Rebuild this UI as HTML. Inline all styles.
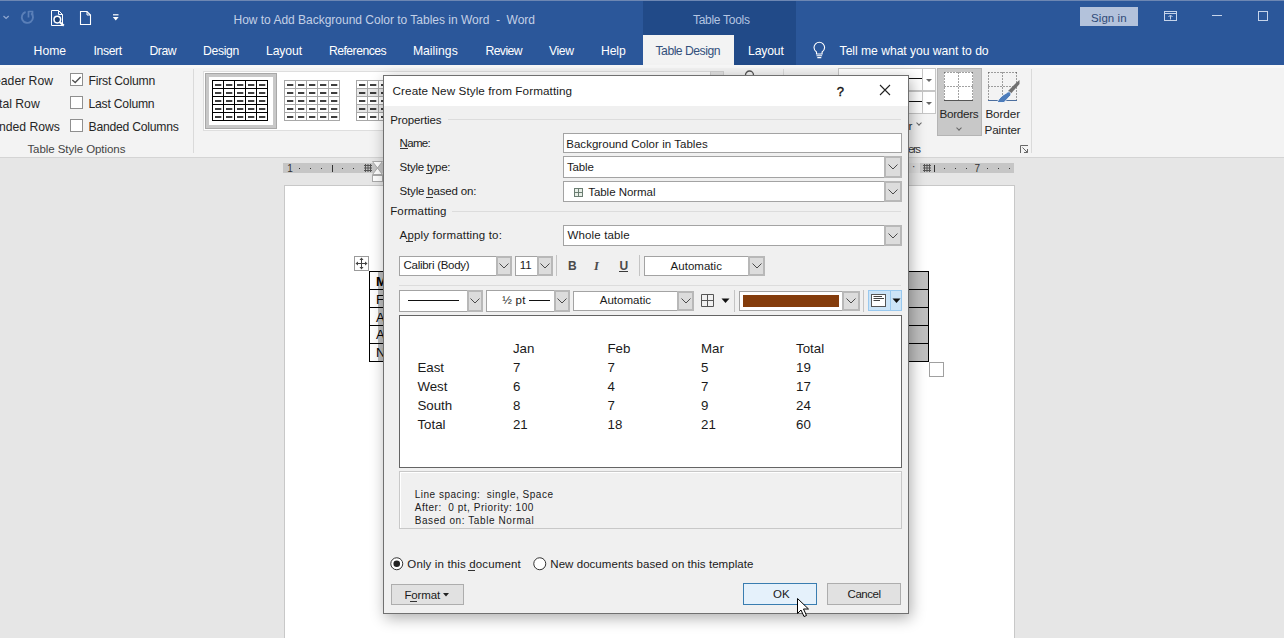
<!DOCTYPE html>
<html><head><meta charset="utf-8"><style>
*{box-sizing:border-box;margin:0;padding:0}
html,body{width:1284px;height:638px;overflow:hidden;background:#e6e6e6;font-family:"Liberation Sans",sans-serif}
.a{position:absolute}
.t{position:absolute;white-space:pre;line-height:1}

.cb{position:absolute;width:13px;height:13px;border:1px solid #8c8c8c;background:#fff}
.box{position:absolute;background:#fff;border:1px solid #a6a6a6}
.dd{position:absolute;background:#dedede;border:1px solid #b9b9b9}
.chev{position:absolute;width:6px;height:6px;border-right:1px solid #505050;border-bottom:1px solid #505050;transform:rotate(45deg)}
.tri{position:absolute;width:0;height:0;border-left:4px solid transparent;border-right:4px solid transparent;border-top:4px solid #222}
.sep{position:absolute;width:1px;background:#c8c8c8}
</style></head><body>
<div class="a" style="left:0px;top:0px;width:1284px;height:65px;background:#2b579a"></div>
<div class="a" style="left:0px;top:0px;width:1284px;height:1px;background:#6d87b3"></div>
<div class="a" style="left:643px;top:1px;width:153px;height:64px;background:#214a88"></div>
<div class="a" style="left:643px;top:35px;width:91px;height:30px;background:#f3f3f3"></div>
<svg class="a" style="left:0;top:0" width="130" height="32" viewBox="0 0 130 32">
<path d="M3.5 16 L6.1 18.4 L8.7 16" fill="none" stroke="#8ea6cf" stroke-width="1.3"/>
<path d="M25.6 12 A5.6 5.6 0 1 0 31.2 13.2" fill="none" stroke="#5a7fb8" stroke-width="1.9"/>
<path d="M28.5 11 V17.5 M28.5 11.5 L32.5 11.5 L32.5 15" fill="none" stroke="#5a7fb8" stroke-width="1.7"/>
<path d="M51.5 10.5 H58.5 L62.5 14.5 V25.5 H51.5 Z" fill="none" stroke="#fff" stroke-width="1"/>
<path d="M58.5 10.5 V14.5 H62.5" fill="none" stroke="#fff" stroke-width="1"/>
<circle cx="57.3" cy="19.6" r="3.3" fill="#1d3f73" stroke="#fff" stroke-width="1.5"/>
<path d="M59.6 22 L63.8 25.6" stroke="#fff" stroke-width="2.1"/>
<path d="M80.5 11.5 H87 L90.5 15 V24.5 H80.5 Z" fill="none" stroke="#fff" stroke-width="1.1"/>
<path d="M87 11.5 V15 H90.5" fill="none" stroke="#fff" stroke-width="1"/>
<path d="M113 14.8 H118.5" stroke="#fff" stroke-width="1.2"/>
<path d="M112.8 17 H118.7 L115.75 20.6 Z" fill="#fff"/>
</svg>
<div class="t" id="t0" style="left:233.50px;top:14.44px;font-size:12px;color:#c3d0e6;letter-spacing:-0.012px;">How to Add Background Color to Tables in Word  -  Word</div>
<div class="t" id="t1" style="left:693.00px;top:13.54px;font-size:12px;color:#b4c5e2;letter-spacing:-0.293px;">Table Tools</div>
<div class="a" style="left:1080px;top:7px;width:58px;height:19px;background:#b3c2db"></div>
<div class="t" id="t2" style="left:1091.00px;top:12.67px;font-size:11.5px;color:#2f4a78;letter-spacing:0.075px;">Sign in</div>
<svg class="a" style="left:1150;top:0" width="134" height="32" viewBox="1150 0 134 32">
<rect x="1164.5" y="11.5" width="12" height="9" fill="none" stroke="#c6d4ea" stroke-width="1"/>
<path d="M1164.5 13.5 H1176.5" stroke="#c6d4ea" stroke-width="1"/>
<path d="M1170.5 19.5 V15.5 M1168.5 17 L1170.5 15 L1172.5 17" fill="none" stroke="#c6d4ea" stroke-width="1"/>
<path d="M1212 15.5 H1222" stroke="#c6d4ea" stroke-width="1"/>
<rect x="1258.5" y="11.5" width="9" height="9" fill="none" stroke="#c6d4ea" stroke-width="1"/>
</svg>
<div class="t" id="t3" style="left:33.60px;top:45.17px;font-size:12.2px;color:#ffffff;letter-spacing:-0.004px;">Home</div>
<div class="t" id="t4" style="left:93.40px;top:45.17px;font-size:12.2px;color:#ffffff;letter-spacing:-0.331px;">Insert</div>
<div class="t" id="t5" style="left:149.50px;top:45.17px;font-size:12.2px;color:#ffffff;letter-spacing:-0.488px;">Draw</div>
<div class="t" id="t6" style="left:203.00px;top:45.17px;font-size:12.2px;color:#ffffff;letter-spacing:-0.323px;">Design</div>
<div class="t" id="t7" style="left:266.00px;top:45.17px;font-size:12.2px;color:#ffffff;letter-spacing:-0.099px;">Layout</div>
<div class="t" id="t8" style="left:329.00px;top:45.17px;font-size:12.2px;color:#ffffff;letter-spacing:-0.533px;">References</div>
<div class="t" id="t9" style="left:412.90px;top:45.17px;font-size:12.2px;color:#ffffff;letter-spacing:0.023px;">Mailings</div>
<div class="t" id="t10" style="left:485.40px;top:45.17px;font-size:12.2px;color:#ffffff;letter-spacing:-0.561px;">Review</div>
<div class="t" id="t11" style="left:549.00px;top:45.17px;font-size:12.2px;color:#ffffff;letter-spacing:-0.401px;">View</div>
<div class="t" id="t12" style="left:601.00px;top:45.17px;font-size:12.2px;color:#ffffff;letter-spacing:-0.120px;">Help</div>
<div class="t" id="t13" style="left:748.00px;top:45.17px;font-size:12.2px;color:#ffffff;letter-spacing:-0.149px;">Layout</div>
<div class="t" id="t14" style="left:839.60px;top:45.17px;font-size:12.2px;color:#ffffff;letter-spacing:-0.052px;">Tell me what you want to do</div>
<div class="t" id="t15" style="left:655.50px;top:45.17px;font-size:12.2px;color:#34507c;letter-spacing:-0.497px;">Table Design</div>
<svg class="a" style="left:808px;top:38px" width="22" height="24" viewBox="808 38 22 24">
<path d="M816.5 54 V52 C814.8 50.8 814 49.2 814 47.5 A5.3 5.3 0 0 1 824.6 47.5 C824.6 49.2 823.8 50.8 822.1 52 V54 Z" fill="none" stroke="#fff" stroke-width="1.1"/>
<path d="M816.5 55.8 H822.1 M817.3 57.6 H821.3" stroke="#fff" stroke-width="1.1"/>
</svg>
<div class="a" style="left:0px;top:65px;width:1284px;height:92px;background:#f3f3f3"></div>
<div class="a" style="left:0px;top:65px;width:1284px;height:3px;background:#f8f8f8"></div>
<div class="a" style="left:0px;top:157px;width:1284px;height:1px;background:#d4d4d4"></div>
<div class="t" id="t16" style="left:-14.75px;top:75.27px;font-size:12.2px;color:#262626;">Header Row</div>
<div class="t" id="t17" style="left:-13.82px;top:97.97px;font-size:12.2px;color:#262626;">Total Row</div>
<div class="t" id="t18" style="left:-15.99px;top:120.67px;font-size:12.2px;color:#262626;">Banded Rows</div>
<div class="a" style="left:70px;top:73px;width:13px;height:13px;background:#fff;border:1px solid #8f8f8f"></div>
<div class="a" style="left:70px;top:96px;width:13px;height:13px;background:#fff;border:1px solid #8f8f8f"></div>
<div class="a" style="left:70px;top:119px;width:13px;height:13px;background:#fff;border:1px solid #8f8f8f"></div>
<svg class="a" style="left:70px;top:73px" width="13" height="13"><path d="M2.3 7 L5.2 9.5 L10.6 4" fill="none" stroke="#505050" stroke-width="1.3"/></svg>
<div class="t" id="t19" style="left:88.50px;top:75.27px;font-size:12.2px;color:#262626;letter-spacing:-0.215px;">First Column</div>
<div class="t" id="t20" style="left:88.50px;top:97.97px;font-size:12.2px;color:#262626;letter-spacing:-0.229px;">Last Column</div>
<div class="t" id="t21" style="left:88.50px;top:120.67px;font-size:12.2px;color:#262626;letter-spacing:-0.236px;">Banded Columns</div>
<div class="t" id="t22" style="left:27.40px;top:144.27px;font-size:11.5px;color:#444;letter-spacing:-0.058px;">Table Style Options</div>
<div class="a" style="left:193px;top:69px;width:1px;height:84px;background:#dadada"></div>
<div class="a" style="left:203px;top:71px;width:508px;height:60px;background:#fff;border:1px solid #dedede;border-right:none"></div>
<div class="a" style="left:205px;top:73px;width:72px;height:56px;background:#fff;border:1px solid #a8a8a8;box-shadow:inset 0 0 0 3px #c8c8c8"></div>
<svg class="a" style="left:212px;top:80px;shape-rendering:crispEdges" width="57" height="42" viewBox="0 0 57 42"><rect x="0" y="0" width="1" height="41" fill="#000"/><rect x="11" y="0" width="1" height="41" fill="#000"/><rect x="22" y="0" width="1" height="41" fill="#000"/><rect x="33" y="0" width="1" height="41" fill="#000"/><rect x="44" y="0" width="1" height="41" fill="#000"/><rect x="55" y="0" width="1" height="41" fill="#000"/><rect x="0" y="0" width="56" height="1" fill="#000"/><rect x="0" y="8" width="56" height="1" fill="#000"/><rect x="0" y="16" width="56" height="1" fill="#000"/><rect x="0" y="24" width="56" height="1" fill="#000"/><rect x="0" y="32" width="56" height="1" fill="#000"/><rect x="0" y="40" width="56" height="1" fill="#000"/><rect x="3" y="4.2" width="6.3" height="1.6" fill="#111" shape-rendering="geometricPrecision"/><rect x="14" y="4.2" width="6.3" height="1.6" fill="#111" shape-rendering="geometricPrecision"/><rect x="25" y="4.2" width="6.3" height="1.6" fill="#111" shape-rendering="geometricPrecision"/><rect x="36" y="4.2" width="6.3" height="1.6" fill="#111" shape-rendering="geometricPrecision"/><rect x="47" y="4.2" width="6.3" height="1.6" fill="#111" shape-rendering="geometricPrecision"/><rect x="3" y="12.2" width="6.3" height="1.6" fill="#111" shape-rendering="geometricPrecision"/><rect x="14" y="12.2" width="6.3" height="1.6" fill="#111" shape-rendering="geometricPrecision"/><rect x="25" y="12.2" width="6.3" height="1.6" fill="#111" shape-rendering="geometricPrecision"/><rect x="36" y="12.2" width="6.3" height="1.6" fill="#111" shape-rendering="geometricPrecision"/><rect x="47" y="12.2" width="6.3" height="1.6" fill="#111" shape-rendering="geometricPrecision"/><rect x="3" y="20.2" width="6.3" height="1.6" fill="#111" shape-rendering="geometricPrecision"/><rect x="14" y="20.2" width="6.3" height="1.6" fill="#111" shape-rendering="geometricPrecision"/><rect x="25" y="20.2" width="6.3" height="1.6" fill="#111" shape-rendering="geometricPrecision"/><rect x="36" y="20.2" width="6.3" height="1.6" fill="#111" shape-rendering="geometricPrecision"/><rect x="47" y="20.2" width="6.3" height="1.6" fill="#111" shape-rendering="geometricPrecision"/><rect x="3" y="28.2" width="6.3" height="1.6" fill="#111" shape-rendering="geometricPrecision"/><rect x="14" y="28.2" width="6.3" height="1.6" fill="#111" shape-rendering="geometricPrecision"/><rect x="25" y="28.2" width="6.3" height="1.6" fill="#111" shape-rendering="geometricPrecision"/><rect x="36" y="28.2" width="6.3" height="1.6" fill="#111" shape-rendering="geometricPrecision"/><rect x="47" y="28.2" width="6.3" height="1.6" fill="#111" shape-rendering="geometricPrecision"/><rect x="3" y="36.2" width="6.3" height="1.6" fill="#111" shape-rendering="geometricPrecision"/><rect x="14" y="36.2" width="6.3" height="1.6" fill="#111" shape-rendering="geometricPrecision"/><rect x="25" y="36.2" width="6.3" height="1.6" fill="#111" shape-rendering="geometricPrecision"/><rect x="36" y="36.2" width="6.3" height="1.6" fill="#111" shape-rendering="geometricPrecision"/><rect x="47" y="36.2" width="6.3" height="1.6" fill="#111" shape-rendering="geometricPrecision"/></svg>
<svg class="a" style="left:284px;top:80px;shape-rendering:crispEdges" width="57" height="42" viewBox="0 0 57 42"><rect x="0" y="0" width="1" height="41" fill="#a8a8a8"/><rect x="11" y="0" width="1" height="41" fill="#a8a8a8"/><rect x="22" y="0" width="1" height="41" fill="#a8a8a8"/><rect x="33" y="0" width="1" height="41" fill="#a8a8a8"/><rect x="44" y="0" width="1" height="41" fill="#a8a8a8"/><rect x="55" y="0" width="1" height="41" fill="#a8a8a8"/><rect x="0" y="0" width="56" height="1" fill="#a8a8a8"/><rect x="0" y="8" width="56" height="1" fill="#a8a8a8"/><rect x="0" y="16" width="56" height="1" fill="#a8a8a8"/><rect x="0" y="24" width="56" height="1" fill="#a8a8a8"/><rect x="0" y="32" width="56" height="1" fill="#a8a8a8"/><rect x="0" y="40" width="56" height="1" fill="#a8a8a8"/><rect x="3" y="4.2" width="6.3" height="1.6" fill="#111" shape-rendering="geometricPrecision"/><rect x="14" y="4.2" width="6.3" height="1.6" fill="#111" shape-rendering="geometricPrecision"/><rect x="25" y="4.2" width="6.3" height="1.6" fill="#111" shape-rendering="geometricPrecision"/><rect x="36" y="4.2" width="6.3" height="1.6" fill="#111" shape-rendering="geometricPrecision"/><rect x="47" y="4.2" width="6.3" height="1.6" fill="#111" shape-rendering="geometricPrecision"/><rect x="3" y="12.2" width="6.3" height="1.6" fill="#111" shape-rendering="geometricPrecision"/><rect x="14" y="12.2" width="6.3" height="1.6" fill="#111" shape-rendering="geometricPrecision"/><rect x="25" y="12.2" width="6.3" height="1.6" fill="#111" shape-rendering="geometricPrecision"/><rect x="36" y="12.2" width="6.3" height="1.6" fill="#111" shape-rendering="geometricPrecision"/><rect x="47" y="12.2" width="6.3" height="1.6" fill="#111" shape-rendering="geometricPrecision"/><rect x="3" y="20.2" width="6.3" height="1.6" fill="#111" shape-rendering="geometricPrecision"/><rect x="14" y="20.2" width="6.3" height="1.6" fill="#111" shape-rendering="geometricPrecision"/><rect x="25" y="20.2" width="6.3" height="1.6" fill="#111" shape-rendering="geometricPrecision"/><rect x="36" y="20.2" width="6.3" height="1.6" fill="#111" shape-rendering="geometricPrecision"/><rect x="47" y="20.2" width="6.3" height="1.6" fill="#111" shape-rendering="geometricPrecision"/><rect x="3" y="28.2" width="6.3" height="1.6" fill="#111" shape-rendering="geometricPrecision"/><rect x="14" y="28.2" width="6.3" height="1.6" fill="#111" shape-rendering="geometricPrecision"/><rect x="25" y="28.2" width="6.3" height="1.6" fill="#111" shape-rendering="geometricPrecision"/><rect x="36" y="28.2" width="6.3" height="1.6" fill="#111" shape-rendering="geometricPrecision"/><rect x="47" y="28.2" width="6.3" height="1.6" fill="#111" shape-rendering="geometricPrecision"/><rect x="3" y="36.2" width="6.3" height="1.6" fill="#111" shape-rendering="geometricPrecision"/><rect x="14" y="36.2" width="6.3" height="1.6" fill="#111" shape-rendering="geometricPrecision"/><rect x="25" y="36.2" width="6.3" height="1.6" fill="#111" shape-rendering="geometricPrecision"/><rect x="36" y="36.2" width="6.3" height="1.6" fill="#111" shape-rendering="geometricPrecision"/><rect x="47" y="36.2" width="6.3" height="1.6" fill="#111" shape-rendering="geometricPrecision"/></svg>
<svg class="a" style="left:356px;top:80px;shape-rendering:crispEdges" width="57" height="42" viewBox="0 0 57 42"><rect x="0" y="8" width="56" height="8" fill="#e8e8e8"/><rect x="0" y="24" width="56" height="8" fill="#e8e8e8"/><rect x="0" y="0" width="1" height="41" fill="#a8a8a8"/><rect x="11" y="0" width="1" height="41" fill="#a8a8a8"/><rect x="22" y="0" width="1" height="41" fill="#a8a8a8"/><rect x="33" y="0" width="1" height="41" fill="#a8a8a8"/><rect x="44" y="0" width="1" height="41" fill="#a8a8a8"/><rect x="55" y="0" width="1" height="41" fill="#a8a8a8"/><rect x="0" y="0" width="56" height="1" fill="#a8a8a8"/><rect x="0" y="8" width="56" height="1" fill="#a8a8a8"/><rect x="0" y="16" width="56" height="1" fill="#a8a8a8"/><rect x="0" y="24" width="56" height="1" fill="#a8a8a8"/><rect x="0" y="32" width="56" height="1" fill="#a8a8a8"/><rect x="0" y="40" width="56" height="1" fill="#a8a8a8"/><rect x="3" y="4.2" width="6.3" height="1.6" fill="#111" shape-rendering="geometricPrecision"/><rect x="14" y="4.2" width="6.3" height="1.6" fill="#111" shape-rendering="geometricPrecision"/><rect x="25" y="4.2" width="6.3" height="1.6" fill="#111" shape-rendering="geometricPrecision"/><rect x="36" y="4.2" width="6.3" height="1.6" fill="#111" shape-rendering="geometricPrecision"/><rect x="47" y="4.2" width="6.3" height="1.6" fill="#111" shape-rendering="geometricPrecision"/><rect x="3" y="12.2" width="6.3" height="1.6" fill="#111" shape-rendering="geometricPrecision"/><rect x="14" y="12.2" width="6.3" height="1.6" fill="#111" shape-rendering="geometricPrecision"/><rect x="25" y="12.2" width="6.3" height="1.6" fill="#111" shape-rendering="geometricPrecision"/><rect x="36" y="12.2" width="6.3" height="1.6" fill="#111" shape-rendering="geometricPrecision"/><rect x="47" y="12.2" width="6.3" height="1.6" fill="#111" shape-rendering="geometricPrecision"/><rect x="3" y="20.2" width="6.3" height="1.6" fill="#111" shape-rendering="geometricPrecision"/><rect x="14" y="20.2" width="6.3" height="1.6" fill="#111" shape-rendering="geometricPrecision"/><rect x="25" y="20.2" width="6.3" height="1.6" fill="#111" shape-rendering="geometricPrecision"/><rect x="36" y="20.2" width="6.3" height="1.6" fill="#111" shape-rendering="geometricPrecision"/><rect x="47" y="20.2" width="6.3" height="1.6" fill="#111" shape-rendering="geometricPrecision"/><rect x="3" y="28.2" width="6.3" height="1.6" fill="#111" shape-rendering="geometricPrecision"/><rect x="14" y="28.2" width="6.3" height="1.6" fill="#111" shape-rendering="geometricPrecision"/><rect x="25" y="28.2" width="6.3" height="1.6" fill="#111" shape-rendering="geometricPrecision"/><rect x="36" y="28.2" width="6.3" height="1.6" fill="#111" shape-rendering="geometricPrecision"/><rect x="47" y="28.2" width="6.3" height="1.6" fill="#111" shape-rendering="geometricPrecision"/><rect x="3" y="36.2" width="6.3" height="1.6" fill="#111" shape-rendering="geometricPrecision"/><rect x="14" y="36.2" width="6.3" height="1.6" fill="#111" shape-rendering="geometricPrecision"/><rect x="25" y="36.2" width="6.3" height="1.6" fill="#111" shape-rendering="geometricPrecision"/><rect x="36" y="36.2" width="6.3" height="1.6" fill="#111" shape-rendering="geometricPrecision"/><rect x="47" y="36.2" width="6.3" height="1.6" fill="#111" shape-rendering="geometricPrecision"/></svg>
<div class="a" style="left:710px;top:71px;width:14px;height:20px;background:#e2e2e2;border:1px solid #d0d0d0"></div>
<svg class="a" style="left:744px;top:70px" width="11" height="8"><path d="M1.5 7 V5 A4 4 0 0 1 9.5 5 V7" fill="none" stroke="#555" stroke-width="1.3"/></svg>
<div class="a" style="left:783px;top:69px;width:1px;height:84px;background:#dadada"></div>
<div class="a" style="left:838px;top:68px;width:98px;height:23px;background:#fff;border:1px solid #c6c6c6"></div>
<div class="a" style="left:838px;top:91px;width:98px;height:23px;background:#fff;border:1px solid #c6c6c6"></div>
<div class="a" style="left:922px;top:68px;width:1px;height:46px;background:#c6c6c6"></div>
<div class="a" style="left:908px;top:78px;width:14px;height:1px;background:#111"></div>
<div class="a" style="left:908px;top:101px;width:14px;height:1px;background:#111"></div>
<div class="tri" style="left:926px;top:79px;border-left-width:3.5px;border-right-width:3.5px;border-top:3px solid #666"></div>
<div class="tri" style="left:926px;top:102px;border-left-width:3.5px;border-right-width:3.5px;border-top:3px solid #666"></div>
<div class="t" id="t23" style="left:908.60px;top:119.80px;font-size:11.7px;color:#262626;">r</div>
<div class="chev" style="left:917px;top:121px;width:4px;height:4px;border-color:#666"></div>
<div class="t" id="t24" style="left:908.00px;top:143.77px;font-size:11.5px;color:#333;letter-spacing:-1.500px;">ers</div>
<div class="a" style="left:937px;top:68px;width:45px;height:68px;background:#c8c8c8;border:1px solid #b4b4b4"></div>
<svg class="a" style="left:943px;top:71px" width="32" height="31" viewBox="943 71 32 31">
<rect x="944" y="72" width="29" height="28" fill="#fff"/>
<path d="M944.5 72.5 H972.5 M944.5 86.5 H972.5 M944.5 72.5 V100 M958.5 72.5 V100 M972.5 72.5 V100" fill="none" stroke="#444" stroke-width="1" stroke-dasharray="1 2"/>
<path d="M944 100.5 H973" stroke="#555" stroke-width="1"/>
</svg>
<div class="t" id="t25" style="left:939.50px;top:108.40px;font-size:11.7px;color:#262626;letter-spacing:-0.291px;">Borders</div>
<div class="chev" style="left:957px;top:126px;width:4px;height:4px;border-color:#666"></div>
<svg class="a" style="left:986px;top:70px" width="36" height="36" viewBox="986 70 36 36">
<path d="M988.5 72.5 H1016.5 M988.5 86.5 H1016.5 M988.5 72.5 V100 M1002.5 72.5 V100 M1016.5 72.5 V100" fill="none" stroke="#444" stroke-width="1" stroke-dasharray="1 2"/>
<path d="M988 100.5 H1017" stroke="#4d6f9f" stroke-width="1"/>
<path d="M1008 91 L1016.5 82.5 L1019.5 80 L1019.5 84 L1011 93.5 Z" fill="#707070"/>
<path d="M1006.5 93 C1009 90.5 1012 92.5 1010.5 95.5 L1004 102.5 L997 102.5 C999 98 1002.5 95 1006.5 93 Z" fill="#4d7cba" stroke="#fff" stroke-width="0.8"/>
</svg>
<div class="t" id="t26" style="left:985.40px;top:108.40px;font-size:11.7px;color:#262626;letter-spacing:-0.082px;">Border</div>
<div class="t" id="t27" style="left:984.60px;top:124.10px;font-size:11.7px;color:#262626;letter-spacing:-0.150px;">Painter</div>
<svg class="a" style="left:1020px;top:145px" width="9" height="9"><path d="M0.5 0.5 H8 M0.5 0.5 V8 M2.5 2.5 L7.5 7.5 M4 7.5 H7.5 V4" fill="none" stroke="#666" stroke-width="1"/></svg>
<div class="a" style="left:1031px;top:69px;width:1px;height:84px;background:#dadada"></div>
<div class="a" style="left:283px;top:163px;width:731px;height:10px;background:#c6c6c6"></div>
<div class="a" style="left:909px;top:163px;width:11px;height:10px;background:#dedede"></div>
<div class="t" id="t28" style="left:287.30px;top:164.23px;font-size:10px;color:#333;">1</div>
<div class="a" style="left:299px;top:168px;width:1.3px;height:1.3px;background:#333"></div>
<div class="a" style="left:310px;top:168px;width:1.3px;height:1.3px;background:#333"></div>
<div class="a" style="left:321px;top:168px;width:1.3px;height:1.3px;background:#333"></div>
<div class="a" style="left:342px;top:168px;width:1.3px;height:1.3px;background:#333"></div>
<div class="a" style="left:353px;top:168px;width:1.3px;height:1.3px;background:#333"></div>
<div class="a" style="left:332px;top:165px;width:1.2px;height:7px;background:#333"></div>
<svg class="a" style="left:364px;top:164px" width="8" height="8"><path d="M0 1.5 H8 M0 4 H8 M0 6.5 H8 M1.5 0 V8 M4 0 V8 M6.5 0 V8" stroke="#555" stroke-width="1"/></svg>
<svg class="a" style="left:372px;top:161px" width="11" height="22"><path d="M0.5 0.5 H10.5 L5.5 7 Z M0.5 13.5 L5.5 7 L10.5 13.5 Z" fill="#fff" stroke="#aaa" stroke-width="1"/><rect x="0.5" y="14.5" width="10" height="6" fill="#fff" stroke="#aaa"/></svg>
<div class="t" id="t29" style="left:912.00px;top:162.23px;font-size:10px;color:#333;">&#183;</div>
<svg class="a" style="left:923px;top:164px" width="8" height="8"><path d="M0 1.5 H8 M0 4 H8 M0 6.5 H8 M1.5 0 V8 M4 0 V8 M6.5 0 V8" stroke="#555" stroke-width="1"/></svg>
<div class="a" style="left:934px;top:165px;width:1.2px;height:7px;background:#333"></div>
<div class="a" style="left:944px;top:168px;width:1.3px;height:1.3px;background:#333"></div>
<div class="a" style="left:955px;top:168px;width:1.3px;height:1.3px;background:#333"></div>
<div class="a" style="left:966px;top:168px;width:1.3px;height:1.3px;background:#333"></div>
<div class="a" style="left:987px;top:168px;width:1.3px;height:1.3px;background:#333"></div>
<div class="a" style="left:998px;top:168px;width:1.3px;height:1.3px;background:#333"></div>
<div class="a" style="left:1009px;top:168px;width:1.3px;height:1.3px;background:#333"></div>
<div class="t" id="t30" style="left:974.50px;top:164.23px;font-size:10px;color:#333;">7</div>
<div class="a" style="left:284px;top:185px;width:731px;height:460px;background:#fff;border-left:1px solid #c8c8c8;border-right:1px solid #c8c8c8;border-top:1px solid #c8c8c8"></div>
<div class="a" style="left:354px;top:256px;width:15px;height:15px;border:1px solid #9a9a9a;background:#fff"></div>
<svg class="a" style="left:355px;top:257px" width="13" height="13" viewBox="0 0 13 13"><path d="M6.5 1.5 V11.5 M1.5 6.5 H11.5" stroke="#444" stroke-width="1"/><path d="M6.5 0.5 L4.5 3 H8.5 Z M6.5 12.5 L4.5 10 H8.5 Z M0.5 6.5 L3 4.5 V8.5 Z M12.5 6.5 L10 4.5 V8.5 Z" fill="#444"/></svg>
<div class="a" style="left:369px;top:271px;width:560px;height:91px;background:#bfbfbf"></div>
<div class="a" style="left:370px;top:272px;width:8px;height:89px;background:#fff"></div>
<div class="a" style="left:369px;top:271px;width:560px;height:1px;background:#000"></div>
<div class="a" style="left:369px;top:289px;width:560px;height:1px;background:#000"></div>
<div class="a" style="left:369px;top:307px;width:560px;height:1px;background:#000"></div>
<div class="a" style="left:369px;top:325px;width:560px;height:1px;background:#000"></div>
<div class="a" style="left:369px;top:343px;width:560px;height:1px;background:#000"></div>
<div class="a" style="left:369px;top:361px;width:560px;height:1px;background:#000"></div>
<div class="a" style="left:369px;top:271px;width:1px;height:91px;background:#000"></div>
<div class="a" style="left:928px;top:271px;width:1px;height:91px;background:#000"></div>
<div class="t" id="t31" style="left:376.00px;top:274.70px;font-size:13px;color:#000;font-weight:bold;">M</div>
<div class="t" id="t32" style="left:376.00px;top:292.60px;font-size:13px;color:#000;">F</div>
<div class="t" id="t33" style="left:376.00px;top:310.50px;font-size:13px;color:#000;">A</div>
<div class="t" id="t34" style="left:376.00px;top:328.40px;font-size:13px;color:#000;">A</div>
<div class="t" id="t35" style="left:376.00px;top:346.30px;font-size:13px;color:#000;">N</div>
<div class="a" style="left:929px;top:362px;width:15px;height:15px;background:#fff;border:1px solid #a0a0a0"></div>
<div class="a" style="left:383px;top:75px;width:526px;height:539px;background:#f0f0f0;border:1px solid #707070;box-shadow:2px 4px 14px rgba(0,0,0,.32)"></div>
<div class="a" style="left:384px;top:76px;width:524px;height:30px;background:#fff"></div>
<div class="t" id="t36" style="left:392.60px;top:85.30px;font-size:11.7px;color:#1a1a1a;letter-spacing:0.088px;">Create New Style from Formatting</div>
<div class="t" id="t37" style="left:836.80px;top:84.70px;font-size:13px;color:#111;-webkit-text-stroke:0.4px #111;">?</div>
<svg class="a" style="left:879px;top:84px" width="12" height="12"><path d="M1 1 L11 11 M11 1 L1 11" stroke="#222" stroke-width="1.1"/></svg>
<div class="t" id="t38" style="left:390.20px;top:114.77px;font-size:11.5px;color:#1a1a1a;letter-spacing:-0.122px;">Properties</div>
<div class="a" style="left:448px;top:119px;width:453px;height:1px;background:#dcdcdc"></div>
<div class="t" id="t39" style="left:390.20px;top:206.47px;font-size:11.5px;color:#1a1a1a;letter-spacing:0.143px;">Formatting</div>
<div class="a" style="left:452px;top:211px;width:449px;height:1px;background:#dcdcdc"></div>
<div class="t" id="t40" style="left:399.60px;top:137.77px;font-size:11.5px;color:#1a1a1a;letter-spacing:-0.695px;">Name:</div>
<div class="a" style="left:400px;top:148px;width:8px;height:1px;background:#333"></div>
<div class="t" id="t41" style="left:399.60px;top:161.77px;font-size:11.5px;color:#1a1a1a;letter-spacing:-0.273px;">Style type:</div>
<div class="a" style="left:426px;top:173px;width:6px;height:1px;background:#333"></div>
<div class="t" id="t42" style="left:399.60px;top:186.47px;font-size:11.5px;color:#1a1a1a;letter-spacing:-0.179px;">Style based on:</div>
<div class="a" style="left:426px;top:197px;width:7px;height:1px;background:#333"></div>
<div class="t" id="t43" style="left:399.60px;top:230.37px;font-size:11.5px;color:#1a1a1a;letter-spacing:0.166px;">Apply formatting to:</div>
<div class="a" style="left:406px;top:241px;width:7px;height:1px;background:#333"></div>
<div class="a" style="left:563px;top:133px;width:339px;height:20px;background:#fff;border:1px solid #a3a3a3"></div>
<div class="t" id="t44" style="left:566.20px;top:138.57px;font-size:11.5px;color:#1a1a1a;letter-spacing:0.041px;">Background Color in Tables</div>
<div class="a" style="left:563px;top:156px;width:339px;height:22px;background:#fff;border:1px solid #a3a3a3"></div>
<div class="a" style="left:884px;top:156px;width:18px;height:22px;background:#dcdcdc;border:2px solid #b8b8b8"></div>
<svg class="a" style="left:887.0px;top:163.0px" width="12" height="8"><path d="M1.5 1.5 L6 6 L10.5 1.5" fill="none" stroke="#4a4a4a" stroke-width="1"/></svg>
<div class="t" id="t45" style="left:567.00px;top:161.97px;font-size:11.5px;color:#1a1a1a;letter-spacing:-0.140px;">Table</div>
<div class="a" style="left:563px;top:181px;width:339px;height:21px;background:#fff;border:1px solid #a3a3a3"></div>
<div class="a" style="left:884px;top:181px;width:18px;height:21px;background:#dcdcdc;border:2px solid #b8b8b8"></div>
<svg class="a" style="left:887.0px;top:187.5px" width="12" height="8"><path d="M1.5 1.5 L6 6 L10.5 1.5" fill="none" stroke="#4a4a4a" stroke-width="1"/></svg>
<svg class="a" style="left:574px;top:188px" width="9" height="9"><rect x="0.5" y="0.5" width="8" height="8" fill="#e8efe8" stroke="#6b7d72"/><path d="M4.5 0.5 V8.5 M0.5 4.5 H8.5" stroke="#6b7d72"/></svg>
<div class="t" id="t46" style="left:588.20px;top:186.57px;font-size:11.5px;color:#1a1a1a;letter-spacing:-0.038px;">Table Normal</div>
<div class="a" style="left:563px;top:225px;width:339px;height:21px;background:#fff;border:1px solid #a3a3a3"></div>
<div class="a" style="left:884px;top:225px;width:18px;height:21px;background:#dcdcdc;border:2px solid #b8b8b8"></div>
<svg class="a" style="left:887.0px;top:231.5px" width="12" height="8"><path d="M1.5 1.5 L6 6 L10.5 1.5" fill="none" stroke="#4a4a4a" stroke-width="1"/></svg>
<div class="t" id="t47" style="left:567.60px;top:230.27px;font-size:11.5px;color:#1a1a1a;letter-spacing:0.124px;">Whole table</div>
<div class="a" style="left:399px;top:256px;width:113px;height:20px;background:#fff;border:1px solid #a3a3a3"></div>
<div class="a" style="left:496px;top:256px;width:16px;height:20px;background:#dcdcdc;border:2px solid #b8b8b8"></div>
<svg class="a" style="left:498.0px;top:262.0px" width="12" height="8"><path d="M1.5 1.5 L6 6 L10.5 1.5" fill="none" stroke="#4a4a4a" stroke-width="1"/></svg>
<div class="t" id="t48" style="left:403.50px;top:260.17px;font-size:11.5px;color:#1a1a1a;letter-spacing:-0.269px;">Calibri (Body)</div>
<div class="a" style="left:515px;top:256px;width:38px;height:20px;background:#fff;border:1px solid #a3a3a3"></div>
<div class="a" style="left:537px;top:256px;width:16px;height:20px;background:#dcdcdc;border:2px solid #b8b8b8"></div>
<svg class="a" style="left:539.0px;top:262.0px" width="12" height="8"><path d="M1.5 1.5 L6 6 L10.5 1.5" fill="none" stroke="#4a4a4a" stroke-width="1"/></svg>
<div class="t" id="t49" style="left:519.70px;top:260.17px;font-size:11.5px;color:#1a1a1a;">11</div>
<div class="a" style="left:556px;top:255px;width:1px;height:21px;background:#c4c4c4"></div>
<div class="t" id="t50" style="left:567.90px;top:260.34px;font-size:12px;color:#4a4a4a;font-weight:bold;">B</div>
<div class="t" id="t51" style="left:594.00px;top:259.92px;font-size:12.5px;color:#4a4a4a;font-family:'Liberation Serif',serif;font-weight:bold;font-style:italic;">I</div>
<div class="t" id="t52" style="left:619.40px;top:260.34px;font-size:12px;color:#4a4a4a;font-weight:bold;">U</div>
<div class="a" style="left:619px;top:271px;width:9px;height:1.3px;background:#3a3a3a"></div>
<div class="a" style="left:639px;top:255px;width:1px;height:21px;background:#c4c4c4"></div>
<div class="a" style="left:644px;top:256px;width:121px;height:20px;background:#fff;border:1px solid #a3a3a3"></div>
<div class="a" style="left:748px;top:256px;width:17px;height:20px;background:#dcdcdc;border:2px solid #b8b8b8"></div>
<svg class="a" style="left:750.5px;top:262.0px" width="12" height="8"><path d="M1.5 1.5 L6 6 L10.5 1.5" fill="none" stroke="#4a4a4a" stroke-width="1"/></svg>
<div class="t" id="t53" style="left:670.50px;top:260.97px;font-size:11.5px;color:#1a1a1a;letter-spacing:0.040px;">Automatic</div>
<div class="a" style="left:399px;top:285px;width:502px;height:1px;background:#dcdcdc"></div>
<div class="a" style="left:399px;top:290px;width:84px;height:22px;background:#fff;border:1px solid #a3a3a3"></div>
<div class="a" style="left:467px;top:290px;width:16px;height:22px;background:#dcdcdc;border:2px solid #b8b8b8"></div>
<svg class="a" style="left:469.0px;top:297.0px" width="12" height="8"><path d="M1.5 1.5 L6 6 L10.5 1.5" fill="none" stroke="#4a4a4a" stroke-width="1"/></svg>
<div class="a" style="left:408px;top:299.5px;width:51px;height:1.6px;background:#111"></div>
<div class="a" style="left:486px;top:290px;width:84px;height:22px;background:#fff;border:1px solid #a3a3a3"></div>
<div class="a" style="left:554px;top:290px;width:16px;height:22px;background:#dcdcdc;border:2px solid #b8b8b8"></div>
<svg class="a" style="left:556.0px;top:297.0px" width="12" height="8"><path d="M1.5 1.5 L6 6 L10.5 1.5" fill="none" stroke="#4a4a4a" stroke-width="1"/></svg>
<div class="t" id="t54" style="left:502.30px;top:295.47px;font-size:11.5px;color:#1a1a1a;letter-spacing:0.252px;">½ pt</div>
<div class="a" style="left:529px;top:300px;width:21px;height:1.2px;background:#111"></div>
<div class="a" style="left:573px;top:291px;width:121px;height:20px;background:#fff;border:1px solid #a3a3a3"></div>
<div class="a" style="left:677px;top:291px;width:17px;height:20px;background:#dcdcdc;border:2px solid #b8b8b8"></div>
<svg class="a" style="left:679.5px;top:297.0px" width="12" height="8"><path d="M1.5 1.5 L6 6 L10.5 1.5" fill="none" stroke="#4a4a4a" stroke-width="1"/></svg>
<div class="t" id="t55" style="left:599.70px;top:295.37px;font-size:11.5px;color:#1a1a1a;letter-spacing:0.018px;">Automatic</div>
<svg class="a" style="left:701px;top:294px" width="13" height="13"><path d="M0.5 0.5 H12.5 V12.5 H0.5 Z M6.5 0.5 V12.5 M0.5 6.5 H12.5" fill="none" stroke="#555" stroke-width="1"/></svg>
<svg class="a" style="left:721px;top:298px" width="9" height="6"><path d="M0.5 0.5 H8.5 L4.5 5 Z" fill="#111"/></svg>
<div class="a" style="left:734px;top:290px;width:1px;height:22px;background:#c4c4c4"></div>
<div class="a" style="left:739px;top:291px;width:121px;height:20px;background:#fff;border:1px solid #a3a3a3"></div>
<div class="a" style="left:842px;top:291px;width:18px;height:20px;background:#dcdcdc;border:2px solid #b8b8b8"></div>
<svg class="a" style="left:845.0px;top:297.0px" width="12" height="8"><path d="M1.5 1.5 L6 6 L10.5 1.5" fill="none" stroke="#4a4a4a" stroke-width="1"/></svg>
<div class="a" style="left:743px;top:295px;width:96px;height:12px;background:#843c0c"></div>
<div class="a" style="left:863px;top:290px;width:1px;height:22px;background:#c4c4c4"></div>
<div class="a" style="left:868px;top:290px;width:34px;height:21px;background:#cce4f7;border:1px solid #99c9ef"></div>
<div class="a" style="left:890px;top:291px;width:1px;height:19px;background:#99c9ef"></div>
<svg class="a" style="left:871px;top:293px" width="16" height="15"><rect x="0.5" y="1.5" width="14" height="12" fill="#fff" stroke="#555"/><path d="M2.5 3.5 H11 M2.5 5.5 H13 M2.5 7.5 H9" stroke="#444" stroke-width="1"/></svg>
<svg class="a" style="left:892px;top:298px" width="9" height="6"><path d="M0.5 0.5 H8.5 L4.5 5 Z" fill="#111"/></svg>
<div class="a" style="left:399px;top:315px;width:503px;height:153px;background:#fff;border:1px solid #646464"></div>
<div class="t" id="t56" style="left:512.90px;top:342.24px;font-size:13.3px;color:#1a1a1a;">Jan</div>
<div class="t" id="t57" style="left:607.50px;top:342.24px;font-size:13.3px;color:#1a1a1a;">Feb</div>
<div class="t" id="t58" style="left:701.00px;top:342.24px;font-size:13.3px;color:#1a1a1a;">Mar</div>
<div class="t" id="t59" style="left:796.00px;top:342.24px;font-size:13.3px;color:#1a1a1a;">Total</div>
<div class="t" id="t60" style="left:417.40px;top:361.34px;font-size:13.3px;color:#1a1a1a;">East</div>
<div class="t" id="t61" style="left:512.90px;top:361.34px;font-size:13.3px;color:#1a1a1a;">7</div>
<div class="t" id="t62" style="left:607.50px;top:361.34px;font-size:13.3px;color:#1a1a1a;">7</div>
<div class="t" id="t63" style="left:701.00px;top:361.34px;font-size:13.3px;color:#1a1a1a;">5</div>
<div class="t" id="t64" style="left:796.00px;top:361.34px;font-size:13.3px;color:#1a1a1a;">19</div>
<div class="t" id="t65" style="left:417.40px;top:380.14px;font-size:13.3px;color:#1a1a1a;">West</div>
<div class="t" id="t66" style="left:512.90px;top:380.14px;font-size:13.3px;color:#1a1a1a;">6</div>
<div class="t" id="t67" style="left:607.50px;top:380.14px;font-size:13.3px;color:#1a1a1a;">4</div>
<div class="t" id="t68" style="left:701.00px;top:380.14px;font-size:13.3px;color:#1a1a1a;">7</div>
<div class="t" id="t69" style="left:796.00px;top:380.14px;font-size:13.3px;color:#1a1a1a;">17</div>
<div class="t" id="t70" style="left:417.40px;top:399.14px;font-size:13.3px;color:#1a1a1a;">South</div>
<div class="t" id="t71" style="left:512.90px;top:399.14px;font-size:13.3px;color:#1a1a1a;">8</div>
<div class="t" id="t72" style="left:607.50px;top:399.14px;font-size:13.3px;color:#1a1a1a;">7</div>
<div class="t" id="t73" style="left:701.00px;top:399.14px;font-size:13.3px;color:#1a1a1a;">9</div>
<div class="t" id="t74" style="left:796.00px;top:399.14px;font-size:13.3px;color:#1a1a1a;">24</div>
<div class="t" id="t75" style="left:417.40px;top:418.04px;font-size:13.3px;color:#1a1a1a;">Total</div>
<div class="t" id="t76" style="left:512.90px;top:418.04px;font-size:13.3px;color:#1a1a1a;">21</div>
<div class="t" id="t77" style="left:607.50px;top:418.04px;font-size:13.3px;color:#1a1a1a;">18</div>
<div class="t" id="t78" style="left:701.00px;top:418.04px;font-size:13.3px;color:#1a1a1a;">21</div>
<div class="t" id="t79" style="left:796.00px;top:418.04px;font-size:13.3px;color:#1a1a1a;">60</div>
<div class="a" style="left:399px;top:471px;width:503px;height:58px;background:#f0f0f0;border:1px solid #c8c8c8;box-shadow:inset 1px 1px 0 #fff"></div>
<div class="t" id="t80" style="left:414.70px;top:490.13px;font-size:10px;color:#1a1a1a;letter-spacing:0.510px;">Line spacing:  single, Space</div>
<div class="t" id="t81" style="left:414.70px;top:503.04px;font-size:10px;color:#1a1a1a;letter-spacing:0.524px;">After:  0 pt, Priority: 100</div>
<div class="t" id="t82" style="left:414.70px;top:515.74px;font-size:10px;color:#1a1a1a;letter-spacing:0.593px;">Based on: Table Normal</div>
<svg class="a" style="left:390px;top:557px" width="14" height="14"><circle cx="6.75" cy="6.75" r="6" fill="#fff" stroke="#333" stroke-width="1"/><circle cx="6.75" cy="6.75" r="3.3" fill="#222"/></svg>
<div class="t" id="t83" style="left:407.30px;top:558.77px;font-size:11.5px;color:#1a1a1a;letter-spacing:0.143px;">Only in this document</div>
<div class="a" style="left:468px;top:569.5px;width:7px;height:1px;background:#333"></div>
<svg class="a" style="left:533px;top:557px" width="14" height="14"><circle cx="6.75" cy="6.75" r="6" fill="#fff" stroke="#333" stroke-width="1"/></svg>
<div class="t" id="t84" style="left:550.30px;top:558.77px;font-size:11.5px;color:#1a1a1a;letter-spacing:0.048px;">New documents based on this template</div>
<div class="a" style="left:391px;top:584px;width:73px;height:21px;background:#e1e1e1;border:1px solid #adadad"></div>
<div class="t" id="t85" style="left:404.40px;top:589.97px;font-size:11.5px;color:#1a1a1a;letter-spacing:-0.120px;">Format</div>
<div class="a" style="left:410px;top:601px;width:7px;height:1px;background:#333"></div>
<svg class="a" style="left:443px;top:593px" width="7" height="4"><path d="M0 0 H6 L3 3.5 Z" fill="#222"/></svg>
<div class="a" style="left:743px;top:583px;width:74px;height:22px;background:#e5f1fb;border:1px solid #3a7db0"></div>
<div class="t" id="t86" style="left:773.00px;top:588.77px;font-size:11.5px;color:#1a1a1a;">OK</div>
<div class="a" style="left:827px;top:583px;width:74px;height:22px;background:#e1e1e1;border:1px solid #adadad"></div>
<div class="t" id="t87" style="left:847.60px;top:588.77px;font-size:11.5px;color:#1a1a1a;letter-spacing:-0.469px;">Cancel</div>
<svg class="a" style="left:796px;top:597px" width="16" height="22" viewBox="0 0 16 22"><path d="M1.5 1.5 V16.5 L5 13 L8 19.5 L10.5 18.5 L7.5 12 H12.5 Z" fill="#fff" stroke="#000" stroke-width="1"/></svg>
</body></html>
